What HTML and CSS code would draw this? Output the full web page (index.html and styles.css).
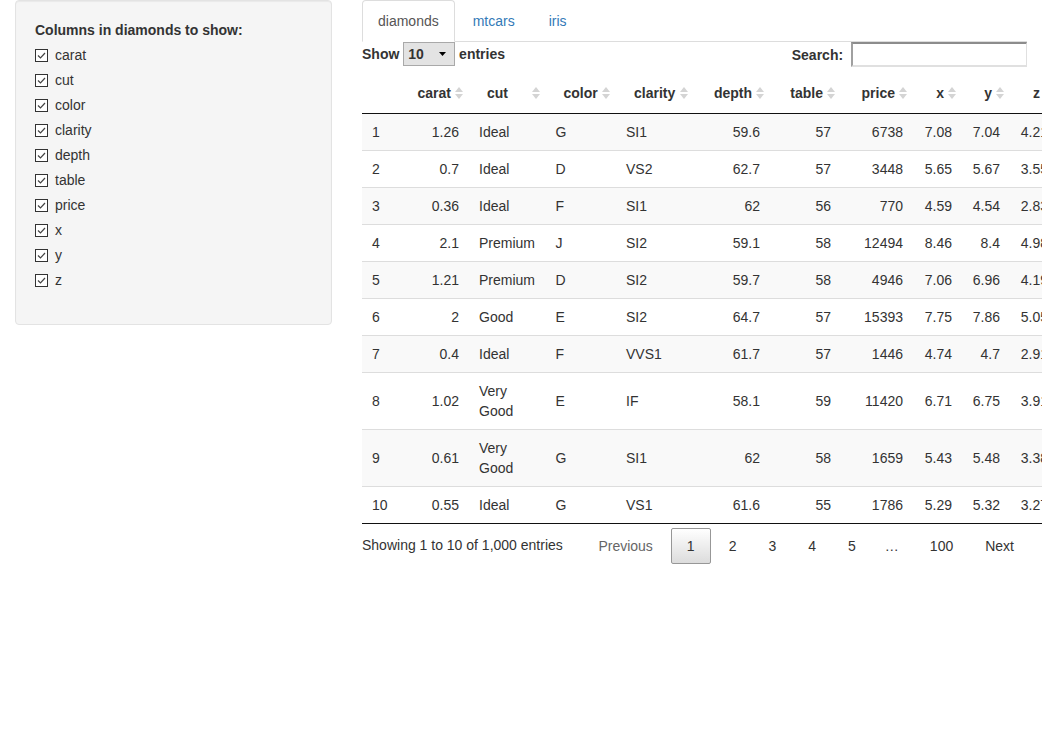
FILE: index.html
```html
<!DOCTYPE html>
<html>
<head>
<meta charset="utf-8">
<title>diamonds</title>
<link rel="stylesheet" href="styles.css">
</head>
<body>
<div class="layout">
  <aside class="sidebar">
    <div class="well">
      <div class="group-label">Columns in diamonds to show:</div>
      <div class="options">
        <label class="opt"><span class="box"><svg width="13" height="13" viewBox="0 0 13 13"><rect x="0.5" y="0.5" width="12" height="12" fill="#fff" stroke="#333"/><path d="M3 6.5 L5.5 9 L10 4" fill="none" stroke="#444" stroke-width="1.2"/></svg></span><span>carat</span></label>
        <label class="opt"><span class="box"><svg width="13" height="13" viewBox="0 0 13 13"><rect x="0.5" y="0.5" width="12" height="12" fill="#fff" stroke="#333"/><path d="M3 6.5 L5.5 9 L10 4" fill="none" stroke="#444" stroke-width="1.2"/></svg></span><span>cut</span></label>
        <label class="opt"><span class="box"><svg width="13" height="13" viewBox="0 0 13 13"><rect x="0.5" y="0.5" width="12" height="12" fill="#fff" stroke="#333"/><path d="M3 6.5 L5.5 9 L10 4" fill="none" stroke="#444" stroke-width="1.2"/></svg></span><span>color</span></label>
        <label class="opt"><span class="box"><svg width="13" height="13" viewBox="0 0 13 13"><rect x="0.5" y="0.5" width="12" height="12" fill="#fff" stroke="#333"/><path d="M3 6.5 L5.5 9 L10 4" fill="none" stroke="#444" stroke-width="1.2"/></svg></span><span>clarity</span></label>
        <label class="opt"><span class="box"><svg width="13" height="13" viewBox="0 0 13 13"><rect x="0.5" y="0.5" width="12" height="12" fill="#fff" stroke="#333"/><path d="M3 6.5 L5.5 9 L10 4" fill="none" stroke="#444" stroke-width="1.2"/></svg></span><span>depth</span></label>
        <label class="opt"><span class="box"><svg width="13" height="13" viewBox="0 0 13 13"><rect x="0.5" y="0.5" width="12" height="12" fill="#fff" stroke="#333"/><path d="M3 6.5 L5.5 9 L10 4" fill="none" stroke="#444" stroke-width="1.2"/></svg></span><span>table</span></label>
        <label class="opt"><span class="box"><svg width="13" height="13" viewBox="0 0 13 13"><rect x="0.5" y="0.5" width="12" height="12" fill="#fff" stroke="#333"/><path d="M3 6.5 L5.5 9 L10 4" fill="none" stroke="#444" stroke-width="1.2"/></svg></span><span>price</span></label>
        <label class="opt"><span class="box"><svg width="13" height="13" viewBox="0 0 13 13"><rect x="0.5" y="0.5" width="12" height="12" fill="#fff" stroke="#333"/><path d="M3 6.5 L5.5 9 L10 4" fill="none" stroke="#444" stroke-width="1.2"/></svg></span><span>x</span></label>
        <label class="opt"><span class="box"><svg width="13" height="13" viewBox="0 0 13 13"><rect x="0.5" y="0.5" width="12" height="12" fill="#fff" stroke="#333"/><path d="M3 6.5 L5.5 9 L10 4" fill="none" stroke="#444" stroke-width="1.2"/></svg></span><span>y</span></label>
        <label class="opt"><span class="box"><svg width="13" height="13" viewBox="0 0 13 13"><rect x="0.5" y="0.5" width="12" height="12" fill="#fff" stroke="#333"/><path d="M3 6.5 L5.5 9 L10 4" fill="none" stroke="#444" stroke-width="1.2"/></svg></span><span>z</span></label>
      </div>
    </div>
  </aside>
  <main class="main">
    <ul class="tabs">
      <li class="tab active">diamonds</li>
      <li class="tab">mtcars</li>
      <li class="tab">iris</li>
    </ul>
    <div class="controls">
      <div class="length">Show <span class="select"><span class="select-val">10</span><svg width="7" height="4" viewBox="0 0 7 4"><polygon points="0,0 7,0 3.5,4" fill="#000"/></svg></span> entries</div>
      <div class="filter">Search: <span class="search-input"></span></div>
    </div>
    <table class="dt">
      <colgroup>
        <col class="c-n"><col class="c-carat"><col class="c-cut"><col class="c-color"><col class="c-clarity"><col class="c-depth"><col class="c-table"><col class="c-price"><col class="c-x"><col class="c-y"><col class="c-z">
      </colgroup>
      <thead>
        <tr>
          <th class="blank"></th>
          <th class="num">carat<svg class="sort" width="8" height="14" viewBox="0 0 8 14"><polygon points="0,6 4,1 8,6" /><polygon points="0,8 8,8 4,13" /></svg></th>
          <th>cut<svg class="sort" width="8" height="14" viewBox="0 0 8 14"><polygon points="0,6 4,1 8,6" /><polygon points="0,8 8,8 4,13" /></svg></th>
          <th>color<svg class="sort" width="8" height="14" viewBox="0 0 8 14"><polygon points="0,6 4,1 8,6" /><polygon points="0,8 8,8 4,13" /></svg></th>
          <th>clarity<svg class="sort" width="8" height="14" viewBox="0 0 8 14"><polygon points="0,6 4,1 8,6" /><polygon points="0,8 8,8 4,13" /></svg></th>
          <th class="num">depth<svg class="sort" width="8" height="14" viewBox="0 0 8 14"><polygon points="0,6 4,1 8,6" /><polygon points="0,8 8,8 4,13" /></svg></th>
          <th class="num">table<svg class="sort" width="8" height="14" viewBox="0 0 8 14"><polygon points="0,6 4,1 8,6" /><polygon points="0,8 8,8 4,13" /></svg></th>
          <th class="num">price<svg class="sort" width="8" height="14" viewBox="0 0 8 14"><polygon points="0,6 4,1 8,6" /><polygon points="0,8 8,8 4,13" /></svg></th>
          <th class="num">x<svg class="sort" width="8" height="14" viewBox="0 0 8 14"><polygon points="0,6 4,1 8,6" /><polygon points="0,8 8,8 4,13" /></svg></th>
          <th class="num">y<svg class="sort" width="8" height="14" viewBox="0 0 8 14"><polygon points="0,6 4,1 8,6" /><polygon points="0,8 8,8 4,13" /></svg></th>
          <th class="num">z<svg class="sort" width="8" height="14" viewBox="0 0 8 14"><polygon points="0,6 4,1 8,6" /><polygon points="0,8 8,8 4,13" /></svg></th>
        </tr>
      </thead>
      <tbody>
        <tr class="odd"><td>1</td><td class="num">1.26</td><td>Ideal</td><td>G</td><td>SI1</td><td class="num">59.6</td><td class="num">57</td><td class="num">6738</td><td class="num">7.08</td><td class="num">7.04</td><td class="num">4.21</td></tr>
        <tr><td>2</td><td class="num">0.7</td><td>Ideal</td><td>D</td><td>VS2</td><td class="num">62.7</td><td class="num">57</td><td class="num">3448</td><td class="num">5.65</td><td class="num">5.67</td><td class="num">3.55</td></tr>
        <tr class="odd"><td>3</td><td class="num">0.36</td><td>Ideal</td><td>F</td><td>SI1</td><td class="num">62</td><td class="num">56</td><td class="num">770</td><td class="num">4.59</td><td class="num">4.54</td><td class="num">2.83</td></tr>
        <tr><td>4</td><td class="num">2.1</td><td>Premium</td><td>J</td><td>SI2</td><td class="num">59.1</td><td class="num">58</td><td class="num">12494</td><td class="num">8.46</td><td class="num">8.4</td><td class="num">4.98</td></tr>
        <tr class="odd"><td>5</td><td class="num">1.21</td><td>Premium</td><td>D</td><td>SI2</td><td class="num">59.7</td><td class="num">58</td><td class="num">4946</td><td class="num">7.06</td><td class="num">6.96</td><td class="num">4.19</td></tr>
        <tr><td>6</td><td class="num">2</td><td>Good</td><td>E</td><td>SI2</td><td class="num">64.7</td><td class="num">57</td><td class="num">15393</td><td class="num">7.75</td><td class="num">7.86</td><td class="num">5.05</td></tr>
        <tr class="odd"><td>7</td><td class="num">0.4</td><td>Ideal</td><td>F</td><td>VVS1</td><td class="num">61.7</td><td class="num">57</td><td class="num">1446</td><td class="num">4.74</td><td class="num">4.7</td><td class="num">2.91</td></tr>
        <tr><td>8</td><td class="num">1.02</td><td>Very Good</td><td>E</td><td>IF</td><td class="num">58.1</td><td class="num">59</td><td class="num">11420</td><td class="num">6.71</td><td class="num">6.75</td><td class="num">3.91</td></tr>
        <tr class="odd"><td>9</td><td class="num">0.61</td><td>Very Good</td><td>G</td><td>SI1</td><td class="num">62</td><td class="num">58</td><td class="num">1659</td><td class="num">5.43</td><td class="num">5.48</td><td class="num">3.38</td></tr>
        <tr><td>10</td><td class="num">0.55</td><td>Ideal</td><td>G</td><td>VS1</td><td class="num">61.6</td><td class="num">55</td><td class="num">1786</td><td class="num">5.29</td><td class="num">5.32</td><td class="num">3.27</td></tr>
      </tbody>
    </table>
    <div class="footer">
      <div class="info">Showing 1 to 10 of 1,000 entries</div>
      <div class="paginate">
        <span class="pbtn disabled">Previous</span>
        <span class="pbtn current">1</span>
        <span class="pbtn">2</span>
        <span class="pbtn">3</span>
        <span class="pbtn">4</span>
        <span class="pbtn">5</span>
        <span class="ellipsis">…</span>
        <span class="pbtn">100</span>
        <span class="pbtn">Next</span>
      </div>
    </div>
  </main>
</div>
</body>
</html>
```

FILE: styles.css
```css
html, body {
  margin: 0;
  padding: 0;
  overflow: hidden;
  background: #fff;
}
body {
  font-family: "Liberation Sans", Arial, sans-serif;
  font-size: 14px;
  line-height: 20px;
  color: #333;
}
.layout {
  display: flex;
  align-items: flex-start;
  padding: 0 15px;
  gap: 30px;
}
.sidebar {
  width: 317px;
  flex: none;
}
.well {
  background: #f5f5f5;
  border: 1px solid #e3e3e3;
  border-radius: 4px;
  box-shadow: inset 0 1px 1px rgba(0, 0, 0, 0.05);
  padding: 19px 19px 34px 19px;
}
.group-label {
  font-weight: bold;
  margin-bottom: 5px;
}
.options {
  display: flex;
  flex-direction: column;
  gap: 5px;
}
.opt {
  display: flex;
  align-items: flex-start;
  height: 20px;
}
.box {
  width: 13px;
  height: 13px;
  margin-top: 4px;
  display: block;
}
.box svg {
  display: block;
}
.opt span:last-child {
  margin-left: 7px;
}
.main {
  width: 665px;
  flex: none;
}
.tabs {
  list-style: none;
  margin: 0;
  padding: 0;
  display: flex;
  border-bottom: 1px solid #ddd;
}
.tab {
  padding: 10px 15px;
  border: 1px solid transparent;
  border-radius: 4px 4px 0 0;
  margin-right: 2px;
  margin-bottom: -1px;
  color: #337ab7;
}
.tab.active {
  color: #555;
  background: #fff;
  border-color: #ddd #ddd transparent #ddd;
}
.controls {
  display: flex;
  justify-content: space-between;
  align-items: center;
  height: 25px;
  font-weight: bold;
  white-space: pre;
}
.length, .filter {
  display: flex;
  align-items: center;
}
.length {
  margin-top: -1px;
}
.select {
  display: inline-flex;
  align-items: center;
  justify-content: space-between;
  box-sizing: border-box;
  width: 52px;
  height: 24px;
  border: 1px solid #a9a9a9;
  background: #e3e3e3;
  padding: 0 8px 0 4px;
}
.select svg {
  display: block;
}
.search-input {
  display: block;
  box-sizing: border-box;
  width: 176px;
  height: 25px;
  margin-left: 4px;
  border-style: solid;
  border-width: 2px 1px 2px 2px;
  border-color: #8c8c8c #e0e0e0 #e0e0e0 #a0a0a0;
  background: #fff;
}
.dt {
  margin-top: 6px;
  table-layout: fixed;
  width: 696px;
  border-collapse: separate;
  border-spacing: 0;
  border-bottom: 1px solid #111;
}
.c-n { width: 36px; }
.c-carat { width: 71px; }
.c-cut { width: 76.5px; }
.c-color { width: 70.5px; }
.c-clarity { width: 78px; }
.c-depth { width: 76px; }
.c-table { width: 71px; }
.c-price { width: 72px; }
.c-x { width: 49px; }
.c-y { width: 48px; }
.c-z { width: 48px; }
.dt th {
  position: relative;
  padding: 10px 18px;
  text-align: left;
  font-weight: bold;
  border-bottom: 1px solid #111;
  white-space: nowrap;
}
.dt th.num {
  text-align: right;
}
.dt th .sort {
  position: absolute;
  right: 6px;
  top: 50%;
  margin-top: -7px;
  fill: #d4d4d4;
}
.dt td {
  padding: 8px 10px;
  border-top: 1px solid #ddd;
  vertical-align: middle;
}
.dt tbody tr:first-child td {
  border-top: none;
}
.dt td.num {
  text-align: right;
}
.dt tr.odd td {
  background: #f9f9f9;
}
.footer {
  display: flex;
  justify-content: space-between;
  align-items: flex-start;
}
.info {
  padding-top: 11px;
}
.paginate {
  display: flex;
  padding-top: 4px;
  margin-right: -2px;
}
.pbtn {
  display: block;
  padding: 7px 14px;
  margin-left: 2px;
  border: 1px solid transparent;
  border-radius: 2px;
  color: #333;
}
.pbtn.disabled {
  color: #666;
  margin-right: 1px;
}
.pbtn.current {
  border-color: #979797;
  background: linear-gradient(to bottom, #ffffff 0%, #dcdcdc 100%);
  padding: 7px 15px;
  margin-right: 1px;
}
.ellipsis {
  display: block;
  padding: 8px 14px;
}
```
